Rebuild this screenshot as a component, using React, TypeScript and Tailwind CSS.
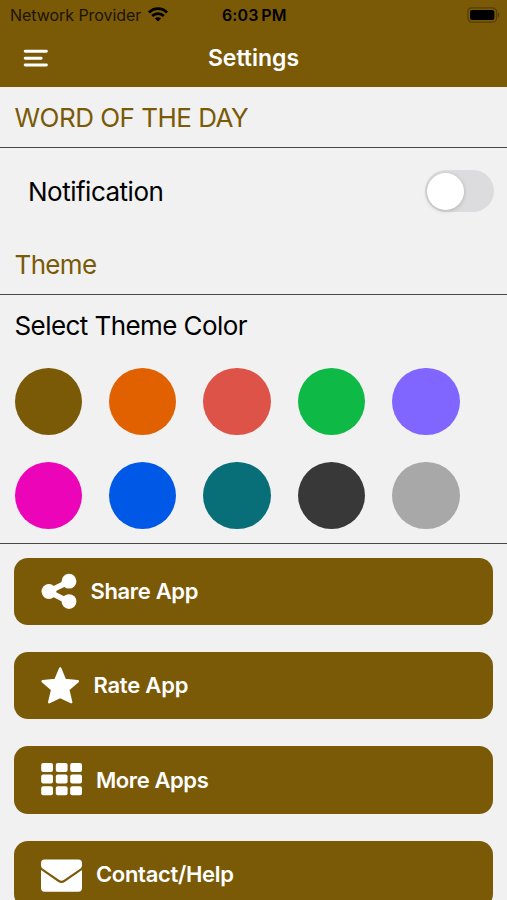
import type { ReactNode } from 'react';

const themeColors = [
  'bg-[#7a5a07]',
  'bg-[#e16100]',
  'bg-[#de5347]',
  'bg-[#0fb946]',
  'bg-[#8066ff]',
  'bg-[#ec04b8]',
  'bg-[#0059e6]',
  'bg-[#086f79]',
  'bg-[#383838]',
  'bg-[#a8a8a8]',
];

function WifiIcon() {
  return (
    <svg width="20" height="15" viewBox="0 0 20 15" fill="none" stroke="currentColor" strokeWidth="2.8">
      <path d="M1 5.6C6 .4 14 .4 19 5.6" />
      <path d="M4.2 9.1C7.5 5.7 12.5 5.7 15.8 9.1" />
      <path d="M10 14.6 6.9 11.5C8.7 9.7 11.3 9.7 13.1 11.5Z" fill="currentColor" stroke="none" />
    </svg>
  );
}

function BatteryIcon() {
  return (
    <svg width="33" height="16" viewBox="0 0 33 16">
      <rect x=".8" y=".8" width="28.8" height="14.4" rx="4.2" fill="none" stroke="#000" strokeOpacity=".3" strokeWidth="1.3" />
      <rect x="3" y="3" width="24.4" height="10" rx="2" fill="#000" />
      <path d="M31 5.6c1.7.6 1.7 4.2 0 4.8z" fill="#000" fillOpacity=".35" />
    </svg>
  );
}

function MenuIcon() {
  return (
    <svg width="25" height="19" viewBox="0 0 25 19" stroke="#fff" strokeWidth="2.9" strokeLinecap="round">
      <path d="M2.2 2.2h21.2M2.2 9.2h16M2.2 16h21.2" />
    </svg>
  );
}

function ShareIcon() {
  return (
    <svg width="36" height="36" viewBox="0 0 36 36" fill="#fff">
      <path d="M28 8.4 7.7 18.6 28 28.9" fill="none" stroke="#fff" strokeWidth="5.6" />
      <circle cx="7.9" cy="18.5" r="7.4" />
      <circle cx="28" cy="8.2" r="7.4" />
      <circle cx="28" cy="28.6" r="7.4" />
    </svg>
  );
}

function StarIcon() {
  return (
    <svg width="38" height="38" viewBox="0 0 38 38" fill="#fff" stroke="#fff" strokeWidth="2.4" strokeLinejoin="round">
      <path d="M19.2 1.4 24 13 36.8 14.3 27.2 22.6 30.2 35.2 19.2 30 8.2 35.2 11.2 22.6 1.6 14.3 14.4 13Z" />
    </svg>
  );
}

function GridIcon() {
  return (
    <svg width="41" height="33" viewBox="0 0 41 33" fill="#fff">
      {[0, 11.6, 23.2].map((y) =>
        [0.2, 14.8, 29.2].map((x) => <rect key={`${x}-${y}`} x={x} y={y} width="11.8" height="9" rx="2" />)
      )}
    </svg>
  );
}

function MailIcon() {
  return (
    <svg width="41" height="35" viewBox="0 -2 41 35" fill="#fff">
      <path d="M3.6.4h33.8A3.6 3.6 0 0 1 41 4v2.2c0 1.5-.8 2.8-1.9 3.6L22.7 21.1c-1.5 1-2.9 1-4.4 0L1.9 9.8C.8 9 0 7.7 0 6.2V4A3.6 3.6 0 0 1 3.6.4z" />
      <path d="M0 11.1 17.3 23c2.2 1.4 4.2 1.4 6.4 0L41 11.1v18a3.6 3.6 0 0 1-3.6 3.6H3.6A3.6 3.6 0 0 1 0 29.1z" />
    </svg>
  );
}

function ActionButton({ icon, label, className }: { icon: ReactNode; label: string; className: string }) {
  return (
    <button className="flex h-[67.3px] w-full shrink-0 items-center rounded-[14px] bg-[#7a5a07] pl-[27px] text-left text-white">
      {icon}
      <span className={`whitespace-nowrap text-[22px] font-semibold leading-none ${className}`}>{label}</span>
    </button>
  );
}

export default function App() {
  return (
    <div className="flex h-[900px] w-[507px] flex-col overflow-hidden bg-[#f1f1f1] font-['Inter',sans-serif] text-black">
      <header className="h-[87px] shrink-0 bg-[#7a5a07]">
        <div className="grid h-[29px] grid-cols-[1fr_64px_1fr] items-center pl-[9px] pr-[8px]">
          <div className="flex items-center gap-[7px] pl-px text-[#1c1300]">
            <span className="whitespace-nowrap text-[16px] leading-none tracking-[-0.05px]">Network Provider</span>
            <span className="text-black"><WifiIcon /></span>
          </div>
          <span className="whitespace-nowrap text-center text-[16px] font-semibold leading-none tracking-[0.1px]">6:03{'\u2009'}PM</span>
          <div className="-mr-px flex justify-end"><BatteryIcon /></div>
        </div>
        <div className="grid h-[58px] grid-cols-3 items-center px-[23px]">
          <button aria-label="Menu"><MenuIcon /></button>
          <h1 className="text-center text-[23px] font-semibold leading-none text-white">Settings</h1>
        </div>
      </header>

      <h2 className="flex h-[61px] shrink-0 items-center border-b border-[#484848] pl-[14.5px] text-[26px] tracking-[-0.52px] text-[#7a5a07]">
        WORD OF THE DAY
      </h2>
      <div className="flex h-[87px] shrink-0 items-center justify-between pb-px pl-[28px] pr-[13px]">
        <span className="text-[26px] tracking-[-0.5px]">Notification</span>
        <button role="switch" aria-checked="false" aria-label="Notification" className="flex h-[42px] w-[69px] items-center rounded-full bg-[#dcdcde] pl-[2px]">
          <span className="size-[37px] rounded-full bg-white shadow-[0_1px_4px_rgba(0,0,0,0.2)]" />
        </button>
      </div>
      <h2 className="flex h-[60px] shrink-0 items-center border-b border-[#484848] pl-[14.5px] text-[26px] tracking-[-0.65px] text-[#7a5a07]">
        Theme
      </h2>

      <section className="h-[249px] shrink-0 border-b border-[#484848]">
        <h3 className="flex h-[62px] items-center pb-px pl-[14.5px] text-[26px] tracking-[-0.57px]">Select Theme Color</h3>
        <div className="grid grid-cols-[repeat(5,67.4px)] gap-x-[27px] gap-y-[27px] pl-[14.6px] pt-[10.5px]">
          {themeColors.map((color) => (
            <button key={color} aria-label="Theme color" className={`size-[67.4px] rounded-full ${color}`} />
          ))}
        </div>
      </section>

      <div className="flex flex-col gap-[27px] pl-[14.4px] pr-[13.6px] pt-[13.7px]">
        <ActionButton icon={<ShareIcon />} label="Share App" className="ml-[13px] tracking-[-0.32px]" />
        <ActionButton icon={<StarIcon />} label="Rate App" className="-mt-px ml-[14px] tracking-[-0.2px]" />
        <ActionButton icon={<GridIcon />} label="More Apps" className="ml-[13.5px] tracking-[-0.4px]" />
        <ActionButton icon={<MailIcon />} label="Contact/Help" className="ml-[13.5px] tracking-[-0.3px]" />
      </div>
    </div>
  );
}
